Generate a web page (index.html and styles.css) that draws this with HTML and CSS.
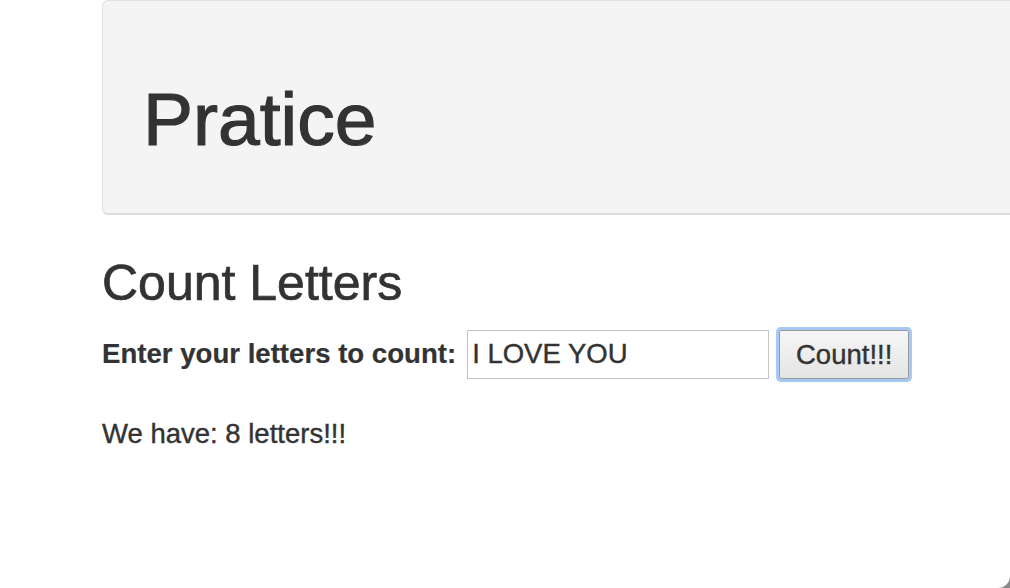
FILE: index.html
```html
<!DOCTYPE html>
<html lang="en">
<head>
<meta charset="utf-8">
<title>Pratice</title>
<link rel="stylesheet" href="styles.css">
</head>
<body>
<div class="page">
  <div class="jumbotron">
    <h1 class="jumbo-title">Pratice</h1>
  </div>
  <h2 class="section-title">Count Letters</h2>
  <form class="count-form">
    <label class="count-label" for="letters">Enter your letters to count:</label>
    <input class="count-input" id="letters" type="text" value="I LOVE YOU">
    <button class="count-button" type="button">Count!!!</button>
  </form>
  <p class="result">We have: 8 letters!!!</p>
</div>
<svg class="window-corner" width="12" height="12" viewBox="0 0 12 12" aria-hidden="true">
  <path d="M12 0 A12 12 0 0 1 0 12 L12 12 Z" fill="#8a8a8a"/>
</svg>
</body>
</html>
```

FILE: styles.css
```css
html, body {
  margin: 0;
  padding: 0;
  background: #ffffff;
  overflow: hidden;
}

body {
  font-family: "Liberation Sans", Arial, sans-serif;
  color: #333333;
  width: 1010px;
  height: 588px;
}

.page {
  margin-left: 102px;
}

.jumbotron {
  box-sizing: border-box;
  width: 1000px;
  height: 215px;
  padding: 78px 0 0 40px;
  background: #f4f4f4;
  border: 1px solid #e0e0e0;
  border-bottom: 2px solid #dedede;
  border-radius: 6px;
}

.jumbo-title {
  margin: 0;
  font-size: 75px;
  line-height: 81px;
  font-weight: 500;
  -webkit-text-stroke: 1.2px #333333;
}

.section-title {
  margin: 41px 0 0 0;
  font-size: 50px;
  line-height: 54px;
  font-weight: 500;
  -webkit-text-stroke: 0.7px #333333;
}

.count-form {
  display: flex;
  align-items: center;
  margin-top: 19px;
}

.count-label {
  font-size: 27.6px;
  line-height: 30px;
  font-weight: 700;
  margin-right: 11px;
  -webkit-text-stroke: 0.2px #333333;
}

.count-input {
  box-sizing: border-box;
  width: 302px;
  height: 49px;
  margin: 0;
  padding: 0 0 0 4px;
  border: 1px solid #c3c3c3;
  background: #ffffff;
  font-family: "Liberation Sans", Arial, sans-serif;
  font-size: 27.5px;
  color: #333333;
  -webkit-text-stroke: 0.4px #333333;
  outline: none;
}

.count-button {
  box-sizing: border-box;
  width: 130px;
  height: 49px;
  margin: 1px 0 0 10px;
  padding: 0;
  border: 1px solid #9b9b9b;
  border-radius: 2px;
  background: linear-gradient(#f6f6f6, #e4e4e4);
  box-shadow: 0 0 0 3px #a6c8f5;
  font-family: "Liberation Sans", Arial, sans-serif;
  font-size: 27.5px;
  color: #333333;
  -webkit-text-stroke: 0.4px #333333;
}

.result {
  margin: 40px 0 0 0;
  font-size: 27.5px;
  line-height: 30px;
  -webkit-text-stroke: 0.4px #333333;
}

.window-corner {
  position: fixed;
  right: 0;
  bottom: 0;
}
```
